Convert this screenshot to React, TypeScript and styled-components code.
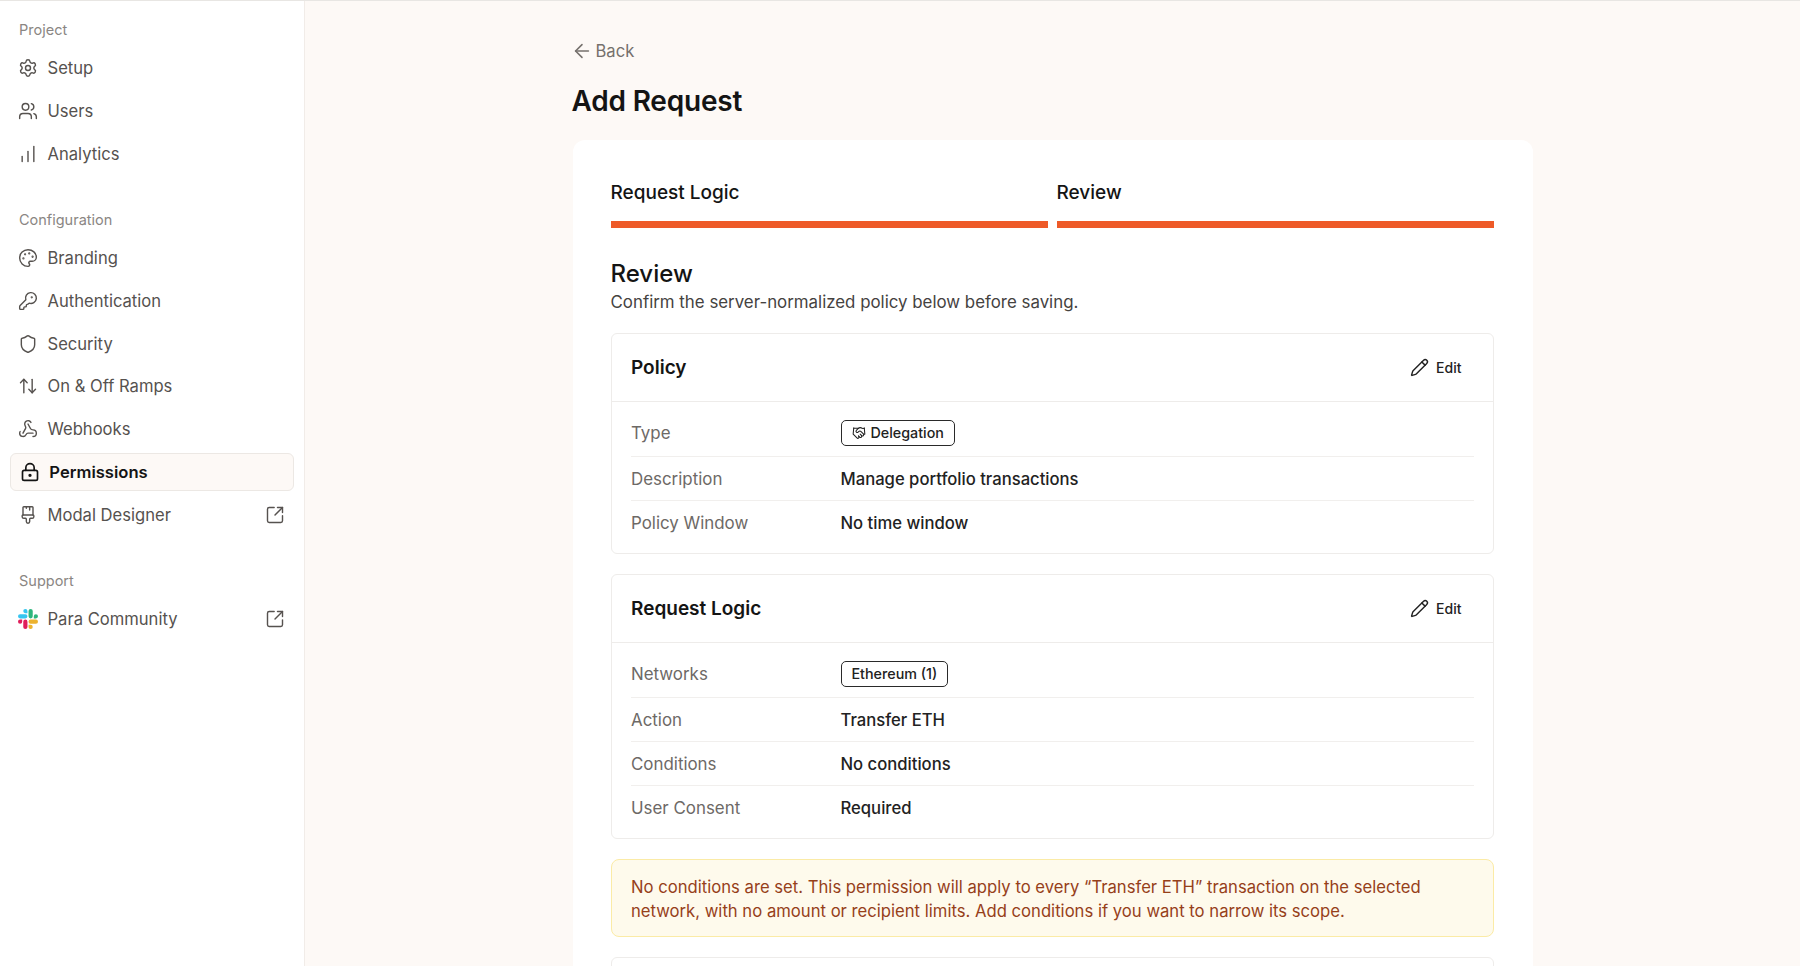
import React from "react";
import styled, { createGlobalStyle } from "styled-components";
import {
  ArrowLeft, ArrowUpDown, ChartNoAxesColumnIncreasing, Handshake, KeyRound, LockKeyhole,
  PaintbrushVertical, Palette, Pencil, Settings, Shield, SquareArrowOutUpRight, Users, Webhook,
} from "lucide-react";

const Global = createGlobalStyle`
  html, body { margin: 0; padding: 0; height: 100%; overflow: hidden; }
  body { font-family: Inter, "Liberation Sans", sans-serif; background: #fdf9f6; color: #141414; }
  #root { height: 100%; }
  * { box-sizing: border-box; }
`;

const Page = styled.div`
  display: flex; height: 966px; overflow: hidden; border-top: 1px solid #e8e6e3; background: #fdf9f6;
`;
const Sidebar = styled.aside`
  width: 305px; flex: none; background: #fff; border-right: 1px solid #f1ece8; padding: 18.5px 10px 0;
  display: flex; flex-direction: column; gap: 37px;
`;
const Section = styled.section`display: flex; flex-direction: column;`;
const SectionLabel = styled.div`
  height: 20px; line-height: 20px; font-size: 14.5px; color: #8a8683; padding-left: 9px; margin-bottom: 9.5px;
`;
const NavList = styled.nav`display: flex; flex-direction: column; gap: 4.8px;`;
const NavItem = styled.div<{ $active?: boolean }>`
  display: flex; align-items: center; gap: ${p => (p.$active ? "9.8px" : "9.2px")}; height: 38px;
  padding: 0 9px 0 ${p => (p.$active ? "8.5px" : "8.3px")};
  border-radius: 6px; font-size: 16.6px; font-weight: ${p => (p.$active ? 600 : 400)};
  color: ${p => (p.$active ? "#141414" : "#56524f")};
  background: ${p => (p.$active ? "#fdf9f6" : "transparent")};
  border: ${p => (p.$active ? "1px solid #ece8e4" : "none")};
`;
const NavText = styled.span`flex: 1;`;
const Main = styled.main`flex: 1; min-width: 0; display: flex; justify-content: center;`;
const Column = styled.div`width: 960px; padding-top: 40px;`;
const Back = styled.div`
  display: flex; align-items: center; gap: 3px; height: 20px; margin-left: -2px; font-size: 16.6px; color: #75706c;
`;
const Title = styled.h1`
  margin: 22px 0 21px -1px; font-size: 28px; line-height: 36px; font-weight: 600; color: #141414; letter-spacing: -0.2px;
`;
const Card = styled.div`background: #fff; border-radius: 12px; padding: 41px 39px 0 38px;`;
const Steps = styled.div`display: grid; grid-template-columns: 1fr 1fr; gap: 9px;`;
const Step = styled.div`display: flex; flex-direction: column; gap: 16px;`;
const StepLabel = styled.div`font-size: 19px; line-height: 24px; font-weight: 500; color: #141414;`;
const StepBar = styled.div`height: 7px; background: #ee5a28;`;
const Heading = styled.h2`margin: 31px 0 2px; font-size: 24px; line-height: 30px; font-weight: 500; color: #141414;`;
const Lead = styled.p`margin: 0 0 20px; font-size: 16.87px; line-height: 22px; color: #45423f;`;
const Box = styled.section`border: 1.5px solid #eeecea; border-radius: 6px; background: #fff; margin-bottom: 20px;`;
const BoxHeader = styled.header`
  display: flex; align-items: center; justify-content: space-between; height: 68px; padding: 0 31px 0 19.5px;
  border-bottom: 1.5px solid #eeecea;
`;
const BoxTitle = styled.h3`margin: 0; font-size: 19px; font-weight: 600; color: #141414;`;
const EditButton = styled.div`display: flex; align-items: center; gap: 7px; font-size: 14px; font-weight: 500; color: #222;`;
const Rows = styled.div`padding: 8px 19px 9px 19.5px;`;
const Row = styled.div`
  display: grid; grid-template-columns: 209.5px 1fr; align-items: center; padding: 11px 0 9px;
  border-bottom: 1px solid #f1efed;
  &:first-child { padding: 10px 0; }
  &:last-child { border-bottom: none; }
`;
const RowLabel = styled.div`font-size: 16.9px; line-height: 23px; color: #6d6966;`;
const RowValue = styled.div`font-size: 16.65px; line-height: 23px; font-weight: 500; color: #222;`;
const Badge = styled.div`
  display: inline-flex; align-items: center; gap: 5px; height: 26px; padding: 0 10px; font-size: 14.3px; font-weight: 500;
  line-height: 24px; border: 1px solid #2a2a2a; border-radius: 5px; color: #222;
`;
const BadgeRow = styled.div`display: flex;`;
const Alert = styled.div`
  margin-bottom: 20px; height: 78px; padding: 15px 19px 15px 19.5px; background: #fefaec; border: 1.5px solid #fbeba6; border-radius: 8px;
  font-size: 16.67px; line-height: 24px; color: #96401a;
`;
const OpenBox = styled(Box)`height: 60px;`;

function SlackLogo() {
  return (
    <svg width="20" height="20" viewBox="0 0 24 24" aria-hidden="true">
      <path fill="#E01E5A" d="M5.042 15.165a2.528 2.528 0 0 1-2.52 2.523A2.528 2.528 0 0 1 0 15.165a2.527 2.527 0 0 1 2.522-2.52h2.52v2.52zM6.313 15.165a2.527 2.527 0 0 1 2.521-2.52 2.527 2.527 0 0 1 2.521 2.52v6.313A2.528 2.528 0 0 1 8.834 24a2.528 2.528 0 0 1-2.521-2.522v-6.313z" />
      <path fill="#36C5F0" d="M8.834 5.042a2.528 2.528 0 0 1-2.521-2.52A2.528 2.528 0 0 1 8.834 0a2.528 2.528 0 0 1 2.521 2.522v2.52H8.834zM8.834 6.313a2.528 2.528 0 0 1 2.521 2.521 2.528 2.528 0 0 1-2.521 2.521H2.522A2.528 2.528 0 0 1 0 8.834a2.528 2.528 0 0 1 2.522-2.521h6.312z" />
      <path fill="#2EB67D" d="M18.956 8.834a2.528 2.528 0 0 1 2.522-2.521A2.528 2.528 0 0 1 24 8.834a2.528 2.528 0 0 1-2.522 2.521h-2.522V8.834zM17.688 8.834a2.528 2.528 0 0 1-2.523 2.521 2.527 2.527 0 0 1-2.52-2.521V2.522A2.527 2.527 0 0 1 15.165 0a2.528 2.528 0 0 1 2.523 2.522v6.312z" />
      <path fill="#ECB22E" d="M15.165 18.956a2.528 2.528 0 0 1 2.523 2.522A2.528 2.528 0 0 1 15.165 24a2.527 2.527 0 0 1-2.52-2.522v-2.522h2.52zM15.165 17.688a2.527 2.527 0 0 1-2.52-2.523 2.526 2.526 0 0 1 2.52-2.52h6.313A2.527 2.527 0 0 1 24 15.165a2.528 2.528 0 0 1-2.522 2.523h-6.313z" />
    </svg>
  );
}

const ext = <SquareArrowOutUpRight size={20} strokeWidth={1.7} />;
const iconProps = { size: 20, strokeWidth: 1.7 };

export default function App() {
  return (
    <>
      <Global />
      <Page>
        <Sidebar>
          <Section>
            <SectionLabel>Project</SectionLabel>
            <NavList>
              <NavItem><Settings {...iconProps} /><NavText>Setup</NavText></NavItem>
              <NavItem><Users {...iconProps} /><NavText>Users</NavText></NavItem>
              <NavItem><ChartNoAxesColumnIncreasing {...iconProps} /><NavText>Analytics</NavText></NavItem>
            </NavList>
          </Section>
          <Section>
            <SectionLabel>Configuration</SectionLabel>
            <NavList>
              <NavItem><Palette {...iconProps} /><NavText>Branding</NavText></NavItem>
              <NavItem><KeyRound {...iconProps} /><NavText>Authentication</NavText></NavItem>
              <NavItem><Shield {...iconProps} /><NavText>Security</NavText></NavItem>
              <NavItem><ArrowUpDown {...iconProps} /><NavText>On &amp; Off Ramps</NavText></NavItem>
              <NavItem><Webhook {...iconProps} /><NavText>Webhooks</NavText></NavItem>
              <NavItem $active><LockKeyhole size={20} strokeWidth={2} /><NavText>Permissions</NavText></NavItem>
              <NavItem><PaintbrushVertical {...iconProps} /><NavText>Modal Designer</NavText>{ext}</NavItem>
            </NavList>
          </Section>
          <Section>
            <SectionLabel>Support</SectionLabel>
            <NavList>
              <NavItem><SlackLogo /><NavText>Para Community</NavText>{ext}</NavItem>
            </NavList>
          </Section>
        </Sidebar>
        <Main>
          <Column>
            <Back><ArrowLeft size={22} strokeWidth={1.7} />Back</Back>
            <Title>Add Request</Title>
            <Card>
              <Steps>
                <Step><StepLabel>Request Logic</StepLabel><StepBar /></Step>
                <Step><StepLabel>Review</StepLabel><StepBar /></Step>
              </Steps>
              <Heading>Review</Heading>
              <Lead>Confirm the server-normalized policy below before saving.</Lead>
              <Box>
                <BoxHeader>
                  <BoxTitle>Policy</BoxTitle>
                  <EditButton><Pencil size={19} strokeWidth={1.8} />Edit</EditButton>
                </BoxHeader>
                <Rows>
                  <Row><RowLabel>Type</RowLabel><BadgeRow><Badge><Handshake size={14} strokeWidth={1.8} />Delegation</Badge></BadgeRow></Row>
                  <Row><RowLabel>Description</RowLabel><RowValue>Manage portfolio transactions</RowValue></Row>
                  <Row><RowLabel>Policy Window</RowLabel><RowValue>No time window</RowValue></Row>
                </Rows>
              </Box>
              <Box>
                <BoxHeader>
                  <BoxTitle>Request Logic</BoxTitle>
                  <EditButton><Pencil size={19} strokeWidth={1.8} />Edit</EditButton>
                </BoxHeader>
                <Rows>
                  <Row><RowLabel>Networks</RowLabel><BadgeRow><Badge>Ethereum (1)</Badge></BadgeRow></Row>
                  <Row><RowLabel>Action</RowLabel><RowValue>Transfer ETH</RowValue></Row>
                  <Row><RowLabel>Conditions</RowLabel><RowValue>No conditions</RowValue></Row>
                  <Row><RowLabel>User Consent</RowLabel><RowValue>Required</RowValue></Row>
                </Rows>
              </Box>
              <Alert>No conditions are set. This permission will apply to every “Transfer ETH” transaction on the selected network, with no amount or recipient limits. Add conditions if you want to narrow its scope.</Alert>
              <OpenBox />
            </Card>
          </Column>
        </Main>
      </Page>
    </>
  );
}
